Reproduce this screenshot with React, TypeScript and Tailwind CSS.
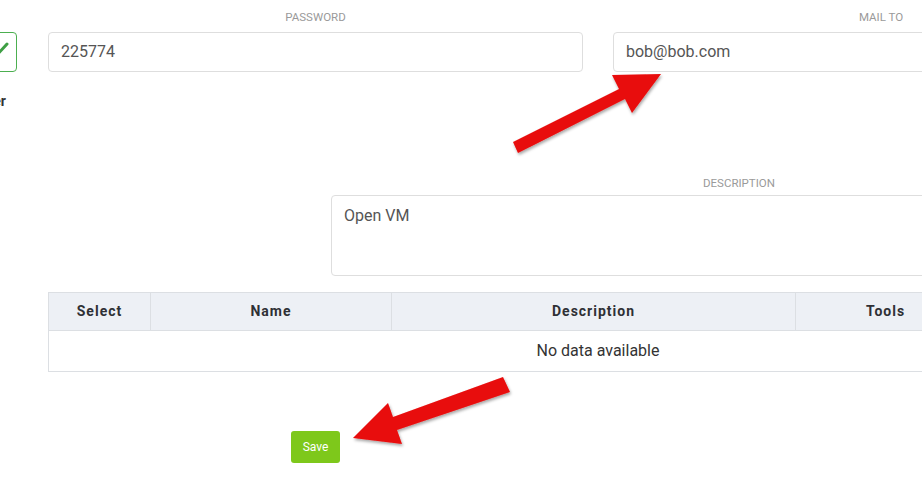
import React from 'react';

const Field = ({ label, value, width }: { label: string; value: string; width: string }) => (
  <div className={`${width} shrink-0`}>
    <div className="text-center text-[11.5px] leading-[13px] h-[13px] mb-[8px] text-[#9a9a9a] uppercase">
      {label}
    </div>
    <div className="h-[40px] border border-[#dedede] rounded-[4px] bg-white flex items-center px-[12px] text-[16px] text-[#555]">
      {value}
    </div>
  </div>
);

const columns = [
  { name: 'Select', w: 'w-[101px]' },
  { name: 'Name', w: 'w-[241px]' },
  { name: 'Description', w: 'w-[404px]' },
  { name: 'Tools', w: 'w-[180px]' },
  { name: '', w: 'w-[174px]' },
];

const Arrows = () => (
  <svg className="absolute inset-0 pointer-events-none" width="922" height="480" viewBox="0 0 922 480">
    <defs>
      <filter id="shadow" x="-20%" y="-20%" width="140%" height="140%">
        <feDropShadow dx="1" dy="2" stdDeviation="1.5" floodColor="#000" floodOpacity="0.35" />
      </filter>
    </defs>
    <polygon
      filter="url(#shadow)"
      fill="#e80a0a"
      points="513,142 619,89 612,75 661,74 632,113 625,99 518,153"
    />
    <polygon
      filter="url(#shadow)"
      fill="#e80a0a"
      points="503,377 393,417 388,403 353,438 402,444 397,430 510,392"
    />
  </svg>
);

export default function App() {
  return (
    <div className="relative w-[922px] h-[480px] overflow-hidden bg-white font-['Roboto',sans-serif]">
      {/* top row */}
      <div className="flex pt-[11px]">
        <div className="w-[48px] h-[61px] shrink-0 pt-[21px]">
          <div className="-ml-[23px] w-[40px] h-[40px] border border-[#4caf50] rounded-[4px] bg-white">
            <svg width="40" height="40" viewBox="0 0 40 40">
              <path d="M12 17 L18 23 L29 11" fill="none" stroke="#3f9f45" strokeWidth="3" strokeLinecap="round" strokeLinejoin="round" />
            </svg>
          </div>
          <div className="w-[6px] mt-[21px] flex justify-end whitespace-nowrap text-[14px] leading-[16px] font-bold text-[#333]">
            Timer
          </div>
        </div>
        <Field label="Password" value="225774" width="w-[535px]" />
        <div className="w-[30px] shrink-0" />
        <Field label="Mail to" value="bob@bob.com" width="w-[536px]" />
      </div>

      {/* description */}
      <div className="mt-[105px] ml-[331px] w-[816px]">
        <div className="text-center text-[11.5px] leading-[13px] h-[13px] mb-[5px] text-[#9a9a9a] uppercase">
          Description
        </div>
        <div className="h-[81px] border border-[#dedede] rounded-[4px] bg-white px-[12px] pt-[10px] text-[16px] leading-[20px] text-[#555]">
          Open VM
        </div>
      </div>

      {/* table */}
      <div className="mt-[16px] ml-[48px] w-[1100px] border border-[#dcdfe3]">
        <div className="flex h-[38px] bg-[#edf0f5] border-b border-[#dcdfe3]">
          {columns.map((c, i) => (
            <div
              key={i}
              className={`${c.w} shrink-0 flex items-center justify-center text-[14px] font-bold tracking-[1px] text-[#2f3035] ${i > 0 ? 'border-l border-[#dcdfe3]' : ''}`}
            >
              {c.name}
            </div>
          ))}
        </div>
        <div className="h-[40px] flex items-center justify-center text-[16px] text-[#333]">
          No data available
        </div>
      </div>

      {/* save */}
      <div className="mt-[59px] ml-[291px]">
        <button className="w-[49px] h-[32px] rounded-[3px] bg-[#7ec81b] text-white text-[12px] flex items-center justify-center">
          Save
        </button>
      </div>

      <Arrows />
    </div>
  );
}
